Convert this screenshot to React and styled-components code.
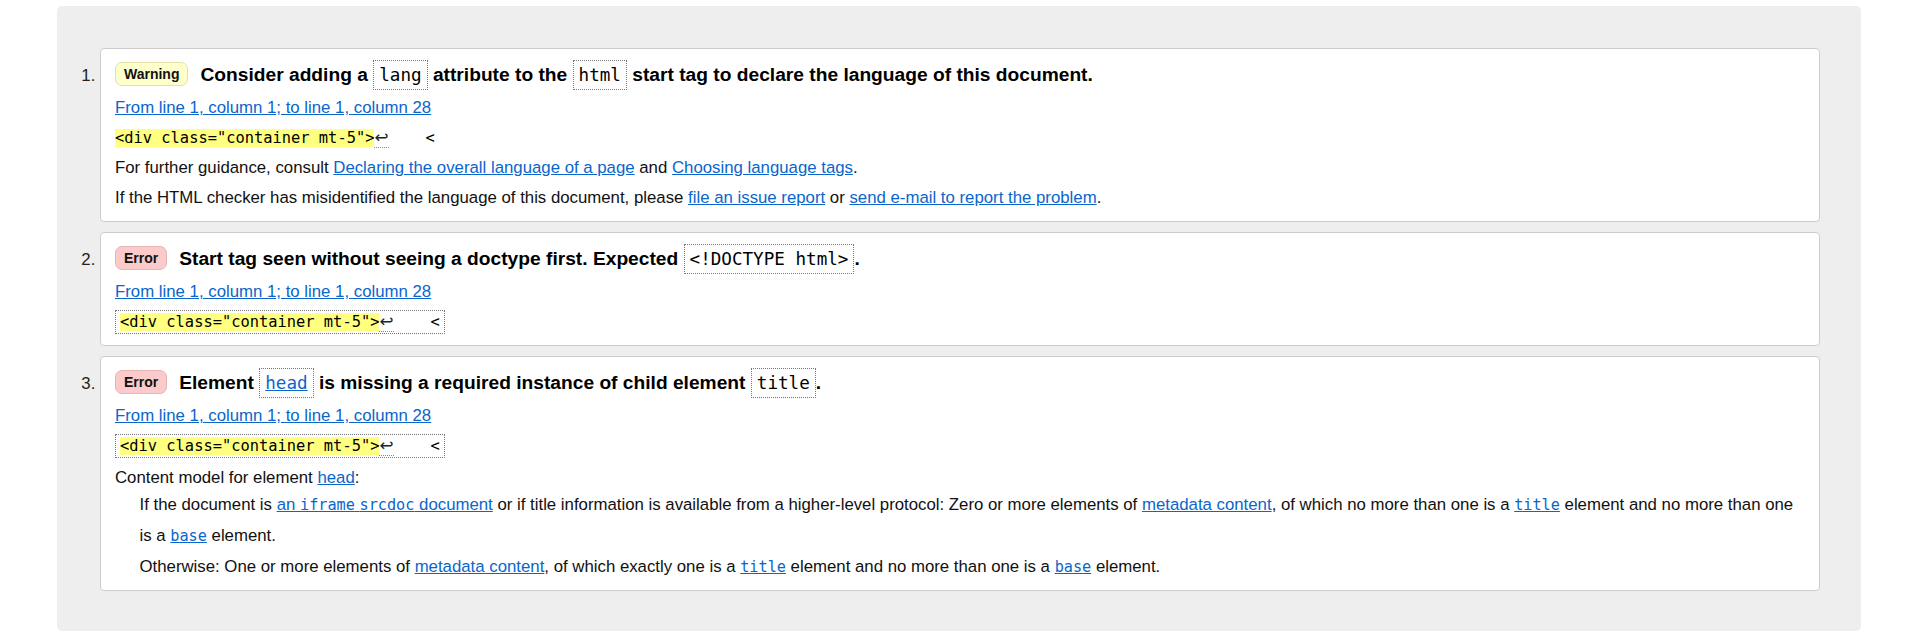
import React from 'react'
import styled, { createGlobalStyle } from 'styled-components'

const GlobalStyle = createGlobalStyle`
  html, body {
    margin: 0;
    background: #fff;
  }
  body {
    font-family: "Liberation Sans", Arial, sans-serif;
    font-size: 16.8px;
    color: #111;
  }
`

const Panel = styled.div`
  margin: 6px 59px 0 57px;
  background: #eeeeee;
  border-radius: 5px;
  padding: 42px 41px 40px 0;
`

const List = styled.ol`
  margin: 0;
  padding-left: 43px;
  list-style: decimal outside;
`

const Card = styled.li`
  background: #fff;
  border: 1px solid #cccccc;
  border-radius: 4px;
  padding: 11px 14px 8px;
  margin-bottom: 10px;
  &:last-child {
    margin-bottom: 0;
  }
  &::marker {
    font-size: 16.8px;
    color: #222;
  }
`

const Title = styled.p`
  margin: 0 0 3px;
  line-height: 30px;
  font-size: 19.2px;
  font-weight: bold;
  color: #000;
`

const Badge = styled.span`
  display: inline-block;
  vertical-align: 2px;
  height: 22px;
  line-height: 22px;
  padding: 0 8px;
  margin-right: 12px;
  border-radius: 7px;
  font-size: 14px;
  font-weight: bold;
  color: #111;
  background: ${p => (p.$kind === 'error' ? '#fbcaca' : '#ffffcc')};
  border: 1px solid ${p => (p.$kind === 'error' ? '#e8b4b4' : '#e4e0a8')};
`

const TitleCode = styled.code`
  font-family: "DejaVu Sans Mono", "Liberation Mono", monospace;
  font-size: 17.6px;
  font-weight: normal;
  line-height: 1;
  padding: 4px 5px;
  border: 1px dotted #777;
`

const Line = styled.p`
  margin: 0;
  line-height: ${p => p.$lh || '30px'};
  padding-top: ${p => p.$pt || '0'};
`

const Link = styled.a`
  color: #0a66cc;
  text-decoration: underline;
  cursor: pointer;
`

const Mono = styled.code`
  font-family: "DejaVu Sans Mono", "Liberation Mono", monospace;
  font-size: 15.2px;
  line-height: 1;
`

const Extract = styled.code`
  font-family: "DejaVu Sans Mono", "Liberation Mono", monospace;
  font-size: 15.4px;
  line-height: 1;
  white-space: pre;
  color: #000;
  padding: ${p => (p.$boxed ? '2px 4px' : '0')};
  border: ${p => (p.$boxed ? '1px dotted #777' : 'none')};
`

const Mark = styled.b`
  font-weight: normal;
  background: #ffff80;
`

const LineBreak = styled.span`
  font-family: "DejaVu Sans", sans-serif;
  font-size: 16.8px;
  color: #222;
  border-bottom: 1px dotted #888;
`

const Def = styled.div`
  margin-left: 24.5px;
`

const Location = () => (
  <Line>
    <Link>From line 1, column 1; to line 1, column 28</Link>
  </Line>
)

const Snippet = ({ boxed }) => (
  <Line>
    <Extract $boxed={boxed}>
      <Mark>{'<div class="container mt-5">'}</Mark>
      <LineBreak>↩</LineBreak>
      {'    <'}
    </Extract>
  </Line>
)

const App = () => {
  return (
    <>
      <GlobalStyle />
      <Panel>
        <List>
          <Card>
            <Title>
              <Badge>Warning</Badge>
              Consider adding a <TitleCode>lang</TitleCode> attribute to the{' '}
              <TitleCode>html</TitleCode> start tag to declare the language of this document.
            </Title>
            <Location />
            <Snippet />
            <Line>
              For further guidance, consult <Link>Declaring the overall language of a page</Link> and{' '}
              <Link>Choosing language tags</Link>.
            </Line>
            <Line>
              If the HTML checker has misidentified the language of this document, please{' '}
              <Link>file an issue report</Link> or <Link>send e-mail to report the problem</Link>.
            </Line>
          </Card>

          <Card>
            <Title>
              <Badge $kind="error">Error</Badge>
              Start tag seen without seeing a doctype first. Expected <TitleCode>{'<!DOCTYPE html>'}</TitleCode>.
            </Title>
            <Location />
            <Snippet boxed />
          </Card>

          <Card>
            <Title>
              <Badge $kind="error">Error</Badge>
              Element{' '}
              <TitleCode>
                <Link>head</Link>
              </TitleCode>{' '}
              is missing a required instance of child element <TitleCode>title</TitleCode>.
            </Title>
            <Location />
            <Snippet boxed />
            <Line $lh="23px" $pt="5px">
              Content model for element <Link>head</Link>:
            </Line>
            <Def>
              <Line $lh="31px">
                If the document is{' '}
                <Link>
                  an <Mono>iframe</Mono> <Mono>srcdoc</Mono> document
                </Link>{' '}
                or if title information is available from a higher-level protocol: Zero or more elements of{' '}
                <Link>metadata content</Link>, of which no more than one is a{' '}
                <Link>
                  <Mono>title</Mono>
                </Link>{' '}
                element and no more than one is a{' '}
                <Link>
                  <Mono>base</Mono>
                </Link>{' '}
                element.
              </Line>
              <Line $lh="31px">
                Otherwise: One or more elements of <Link>metadata content</Link>, of which exactly one is a{' '}
                <Link>
                  <Mono>title</Mono>
                </Link>{' '}
                element and no more than one is a{' '}
                <Link>
                  <Mono>base</Mono>
                </Link>{' '}
                element.
              </Line>
            </Def>
          </Card>
        </List>
      </Panel>
    </>
  )
}

export default App
